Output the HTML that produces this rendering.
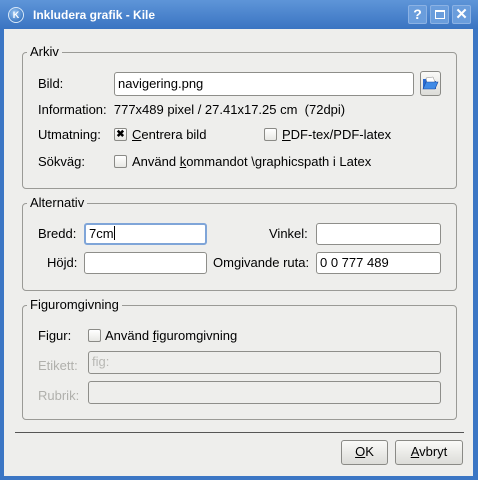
<!DOCTYPE html>
<html><head><meta charset="utf-8"><style>
*{box-sizing:border-box;margin:0;padding:0}
body{width:478px;height:480px;background:#3b76c4;font-family:"Liberation Sans",sans-serif;font-size:13px;color:#000;position:relative;overflow:hidden}
.tb{position:absolute;left:0;top:0;width:478px;height:29px;background:linear-gradient(#5e95d8,#3a74c2)}
.body{position:absolute;left:4px;top:29px;width:469px;height:447px;background:#eeeeec}
.a{position:absolute;white-space:nowrap}
.grp{position:absolute;border:1px solid #9a9a96;border-radius:4px}
.lg{position:absolute;background:#eeeeec;padding:0 3px;top:-9px;left:4px;line-height:16px}
.in{position:absolute;background:#fff;border:1px solid #8e8e8a;border-radius:3px;padding-left:3px;line-height:20px}
.dis{background:#eeeeec;color:#b8b8b4}
.cb{position:absolute;width:13px;height:13px;border:1px solid #8a8a86;background:linear-gradient(#fff,#e8e8e4);border-radius:2px}
.btn{position:absolute;border:1px solid #8a8a86;border-radius:3px;background:linear-gradient(#fafaf8,#dcdcd8);text-align:center;line-height:22px}
.tbtn{position:absolute;top:5px;width:19px;height:19px;border:1px solid #8cb2e4;border-radius:2px;background:#6a9ddc;color:#fff;font-weight:bold;text-align:center;line-height:17px;font-size:14px}
.g{color:#b0b0ac}
</style></head><body>
<div class="tb"></div>
<div class="a" style="left:8px;top:7px;width:16px;height:16px;border-radius:50%;background:radial-gradient(circle at 40% 35%,#9cc8f4,#1b5cb0);border:1px solid #d8e8f8;color:#fff;font-size:9px;font-weight:bold;line-height:14px;text-align:center">K</div>
<div class="a" style="left:33px;top:7.5px;color:#fff;font-weight:bold;font-size:12px">Inkludera grafik - Kile</div>
<div class="tbtn" style="left:408px">?</div>
<div class="tbtn" style="left:430px"><div style="width:10px;height:9px;border:1.5px solid #fff;border-top-width:2px;margin:4px auto 0"></div></div>
<div class="tbtn" style="left:452px;font-size:15px">✕</div>
<div class="body"></div>

<div class="grp" style="left:22px;top:52px;width:435px;height:137px"><div class="lg">Arkiv</div></div>
<div class="a" style="left:38px;top:76px">Bild:</div>
<div class="in" style="left:114px;top:72px;width:300px;height:24px;line-height:22px">navigering.png</div>
<div class="btn" style="left:420px;top:71px;width:21px;height:25px"><svg width="17" height="15" viewBox="0 0 17 15" style="margin-top:4px"><path d="M1 3h5l1 2h7v8H1z" fill="#2a6ad0"/><path d="M4 2l7-1 2 5-8 1z" fill="#fff" stroke="#888" stroke-width=".5"/><path d="M1 13l3-7h12l-3 7z" fill="#3f8ae6" stroke="#1a4aa0" stroke-width=".6"/></svg></div>
<div class="a" style="left:38px;top:102px">Information:&nbsp; 777x489 pixel / 27.41x17.25 cm&nbsp; (72dpi)</div>
<div class="a" style="left:38px;top:127px">Utmatning:</div>
<div class="cb" style="left:114px;top:128px;font-size:10px;line-height:11px;text-align:center;font-weight:bold">✖</div>
<div class="a" style="left:132px;top:127px"><u>C</u>entrera bild</div>
<div class="cb" style="left:264px;top:128px"></div>
<div class="a" style="left:282px;top:127px"><u>P</u>DF-tex/PDF-latex</div>
<div class="a" style="left:38px;top:154px">Sökväg:</div>
<div class="cb" style="left:114px;top:155px"></div>
<div class="a" style="left:132px;top:154px">Använd <u>k</u>ommandot \graphicspath i Latex</div>

<div class="grp" style="left:22px;top:203px;width:435px;height:88px"><div class="lg">Alternativ</div></div>
<div class="a" style="left:38px;top:226px">Bredd:</div>
<div class="in" style="left:84px;top:223px;width:123px;height:22px;border:2px solid #7fa5d8;line-height:18px">7cm<span style="display:inline-block;width:1px;height:14px;background:#000;vertical-align:-2px"></span></div>
<div class="a" style="left:269px;top:226px">Vinkel:</div>
<div class="in" style="left:316px;top:223px;width:125px;height:22px"></div>
<div class="a" style="left:47px;top:255px">Höjd:</div>
<div class="in" style="left:84px;top:252px;width:123px;height:22px"></div>
<div class="a" style="left:213px;top:255px">Omgivande ruta:</div>
<div class="in" style="left:316px;top:252px;width:125px;height:22px">0 0 777 489</div>

<div class="grp" style="left:22px;top:305px;width:435px;height:115px"><div class="lg">Figuromgivning</div></div>
<div class="a" style="left:38px;top:328px">Figur:</div>
<div class="cb" style="left:88px;top:329px"></div>
<div class="a" style="left:105px;top:328px">Använd <u>f</u>iguromgivning</div>
<div class="a g" style="left:38px;top:358px">Etikett:</div>
<div class="in dis" style="left:88px;top:351px;width:353px;height:23px">fig:</div>
<div class="a g" style="left:38px;top:388px">Rubrik:</div>
<div class="in dis" style="left:88px;top:381px;width:353px;height:23px"></div>

<div class="a" style="left:15px;top:432px;width:449px;height:1px;background:#555"></div>
<div class="btn" style="left:341px;top:440px;width:47px;height:25px"><u>O</u>K</div>
<div class="btn" style="left:395px;top:440px;width:68px;height:25px"><u>A</u>vbryt</div>
</body></html>
